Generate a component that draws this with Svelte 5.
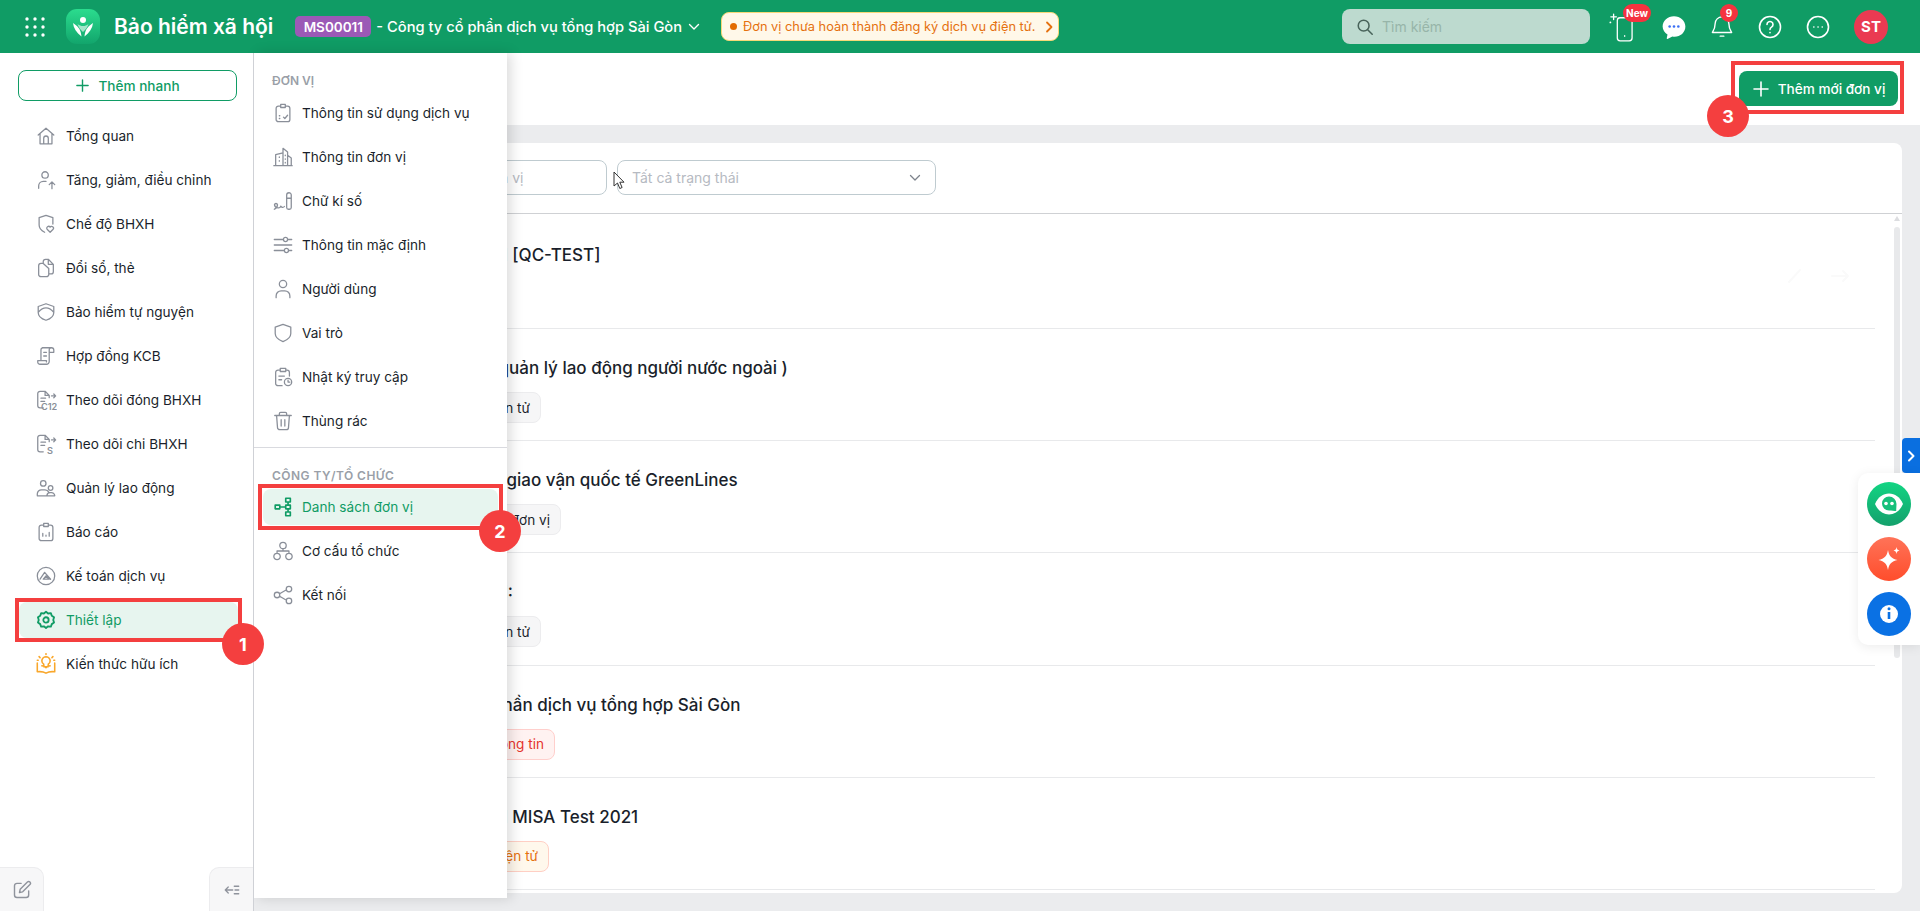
<script>
    const stroke = {
        home: "M3.5 11 12 3.5l8.5 7.5M5.5 9.5v11h13v-11M9.5 20.5v-6a2.5 2.5 0 0 1 5 0v6",
        userUp: "M11 3a3.5 3.5 0 1 0 0 7 3.5 3.5 0 0 0 0-7ZM4 21v-2.5a5 5 0 0 1 5-5h3M18.5 21.5v-7M15.5 17l3-3 3 3",
        shieldHeart: "M12 2.500 19.500 5v7M12 2.500 4.500 5v8c0 4 3 6.500 6 8M16.500 21l-3.300-3.300a2 2 0 0 1 3.300-2.300 2 2 0 0 1 3.300 2.300Z",
        copy: "M9 7V5a2.500 2.500 0 0 1 2.500-2.500h3L20 8v8a2.500 2.500 0 0 1-2.500 2.500H15M14.500 2.500V8H20M6.500 7H9l6 5.500V19a2.500 2.500 0 0 1-2.500 2.500h-6A2.500 2.500 0 0 1 4 19V9.500A2.500 2.500 0 0 1 6.500 7Z",
        shield: "M12 3l8.500 3v6.500c0 4-3.800 7-8.500 8.500-4.700-1.500-8.500-4.500-8.500-8.500V6ZM3.800 12c3-3.500 5-4.500 8.200-4.500s5.200 1 8.200 4.500",
        scroll: "M8 3h10.500M18 3a2.500 2.500 0 0 0-2.500 2.500V18a3 3 0 0 1-3 3H5.500a2.500 2.500 0 0 1-2.500-2.500V17h9.500v1.500M6.500 17V5.500A2.500 2.500 0 0 1 9 3M18 3a2.500 2.500 0 0 1 2.500 2.500V8h-5M9.500 8h3M9.500 12h3",
        users: "M9 4a3 3 0 1 0 0 6 3 3 0 0 0 0-6ZM2.500 20v-1.500A4.500 4.500 0 0 1 7 14h4a4.500 4.500 0 0 1 4 2.500M17 9.500a2.500 2.500 0 1 0 0 5 2.500 2.500 0 0 0 0-5ZM13 20.500v-.5a3.500 3.500 0 0 1 3.500-3h1A3.500 3.500 0 0 1 21.500 20v.5ZM2.500 20.500H13",
        report: "M9 4.500H7A2.500 2.500 0 0 0 4.500 7v12A2.500 2.500 0 0 0 7 21.500h10a2.500 2.500 0 0 0 2.500-2.500V7A2.500 2.500 0 0 0 17 4.500h-2M9.500 2.500h5v3.500h-5ZM8.500 16.500v-3M12 16.500v-1M15.500 16.500v-4",
        ledger: "M12 2.500a9.500 9.500 0 1 0 0 19 9.500 9.500 0 0 0 0-19ZM5.500 15.500l5-7.500 6.500 7.500M9 15.500l3-3.500 3.500 3.500Z",
        clipboardCheck: "M9 4.500H7A2.500 2.500 0 0 0 4.500 7v12A2.500 2.500 0 0 0 7 21.500h10a2.500 2.500 0 0 0 2.500-2.500V7A2.500 2.500 0 0 0 17 4.500h-2M9.500 2.500h5v3.500h-5ZM8 15h.5M8 18h.5M12.500 16.500l1.500 1.500 3-3.500",
        building: "M2 21.500h20M4 21.500V9.500l8-2M12 21.500V2.500l5 4v15M17 10l4 3v8.500M8 12v.5M8 16v.5M14.500 10v.5M14.500 14v.5M14.500 18v.5",
        sign: "M2.500 21c2-1 3.500-3 3.500-5a1.700 1.700 0 0 0-3.300 0c0 2 1.800 3 3.800 3.500 1.500.3 3-.5 3-2 .5 1.500 3 2 4 .5M16 5.500a2.500 2.500 0 0 1 5 0V19a2 2 0 0 1-2 2h-1a2 2 0 0 1-2-2ZM16 9h5",
        sliders: "M2.500 6h10M17 6h4.500M12.500 6a2.200 2.200 0 1 0 4.500 0 2.200 2.200 0 0 0-4.500 0M2.500 12h19M2.500 18h11M18 18h3.500M13.500 18a2.200 2.200 0 1 0 4.500 0 2.200 2.200 0 0 0-4.500 0",
        user: "M12 2.500a4 4 0 1 0 0 8 4 4 0 0 0 0-8ZM4.500 21.500v-2a5.500 5.500 0 0 1 5.500-5.500h4a5.500 5.500 0 0 1 5.500 5.500v2",
        shieldPlain: "M12 2.500 20.500 5.500v7c0 4-3.800 7-8.500 9-4.700-2-8.500-5-8.500-9v-7Z",
        log: "M9 4.500H6.500A2.500 2.500 0 0 0 4 7v12a2.500 2.500 0 0 0 2.500 2.500H11M15 4.500h1.500A2.500 2.500 0 0 1 19 7v4M9 2.500h6v3.500H9ZM7.500 11h6M7.500 15h3M17.500 13.500a4 4 0 1 0 0 8 4 4 0 0 0 0-8ZM17.500 15.500v2h2",
        trash: "M3 6h18M8 6V4a1.500 1.500 0 0 1 1.500-1.500h5A1.500 1.500 0 0 1 16 4v2M5 6l1 13a2.500 2.500 0 0 0 2.500 2.500h7A2.500 2.500 0 0 0 18 19l1-13M10 10.500v7M14 10.500v7",
        hierarchy: "M3.500 10h5v4h-5ZM15 2.500h5v4h-5ZM15 10h5v4h-5ZM15 17.500h5v4h-5ZM8.500 12H15M17.500 6.500V10M17.500 14v3.500",
        org: "M12 2.500a3.500 3.500 0 1 0 0 7 3.500 3.500 0 0 0 0-7ZM5.500 14.500a3.500 3.500 0 1 0 0 7 3.500 3.500 0 0 0 0-7ZM18.500 14.500a3.500 3.500 0 1 0 0 7 3.500 3.500 0 0 0 0-7ZM5.500 14.500V12h13v2.500M12 9.500V12",
        share: "M18.500 2.500a3 3 0 1 0 0 6 3 3 0 0 0 0-6ZM18.500 15.500a3 3 0 1 0 0 6 3 3 0 0 0 0-6ZM5.500 9a3 3 0 1 0 0 6 3 3 0 0 0 0-6ZM8.300 10.700l7.500-4.500M8.300 13.300l7.500 4.500",
        gear: "M12 3l2.300 1.900 3-.4 1 2.800 2.500 1.700-.9 2.900.9 2.900-2.500 1.700-1 2.800-3-.4L12 20.800l-2.300-1.900-3 .4-1-2.800-2.500-1.700.9-2.900-.9-2.900 2.500-1.700 1-2.800 3 .4ZM12 9a2.900 2.900 0 1 0 0 5.800A2.900 2.900 0 0 0 12 9Z",
        book: "M2.500 11v9.500c3.500-.5 7 0 9.500 1.500 2.500-1.500 6-2 9.500-1.500V11M7.500 14c1.800.3 3.500 1 4.500 2 1-1 2.700-1.700 4.500-2M12 4a4.500 4.500 0 0 0-2.500 8.200V15h5v-2.800A4.500 4.500 0 0 0 12 4ZM12 .8v.8M4.500 4l1 1M19.500 4l-1 1M2.500 8h1M20.500 8h1"
    };

    const nav = [
        { label: "Tổng quan", icon: "home" },
        { label: "Tăng, giảm, điều chỉnh", icon: "userUp" },
        { label: "Chế độ BHXH", icon: "shieldHeart" },
        { label: "Đổi sổ, thẻ", icon: "copy" },
        { label: "Bảo hiểm tự nguyện", icon: "shield" },
        { label: "Hợp đồng KCB", icon: "scroll" },
        { label: "Theo dõi đóng BHXH", tiny: "C12" },
        { label: "Theo dõi chi BHXH", tiny: "S" },
        { label: "Quản lý lao động", icon: "users" },
        { label: "Báo cáo", icon: "report" },
        { label: "Kế toán dịch vụ", icon: "ledger" },
        { label: "Thiết lập", icon: "gear", active: true },
        { label: "Kiến thức hữu ích", icon: "book", warm: true }
    ];

    const menuUnit = [
        { label: "Thông tin sử dụng dịch vụ", icon: "clipboardCheck" },
        { label: "Thông tin đơn vị", icon: "building" },
        { label: "Chữ kí số", icon: "sign" },
        { label: "Thông tin mặc định", icon: "sliders" },
        { label: "Người dùng", icon: "user" },
        { label: "Vai trò", icon: "shieldPlain" },
        { label: "Nhật ký truy cập", icon: "log" },
        { label: "Thùng rác", icon: "trash" }
    ];

    const menuOrg = [
        { label: "Danh sách đơn vị", icon: "hierarchy", active: true },
        { label: "Cơ cấu tổ chức", icon: "org" },
        { label: "Kết nối", icon: "share" }
    ];

    const rows = [
        { title: "Công ty ABCI [QC-TEST]" },
        { title: "Công ty TI ( quản lý lao động người nước ngoài )", tag: "Đăng ký điện tử", tone: "gray", width: 142 },
        { title: "Công ty CPT giao vận quốc tế GreenLines", tag: "Chưa có đơn vị", tone: "gray", width: 162 },
        { title: "Công ty ABCI:", tag: "Đăng ký điện tử", tone: "gray", width: 142 },
        { title: "Công ty cổ phần dịch vụ tổng hợp Sài Gòn", tag: "Thiếu thông tin", tone: "red", width: 156 },
        { title: "Công ty ABCI MISA Test 2021", tag: "Chưa có điện tử", tone: "orange", width: 150 }
    ];
</script>

{#snippet icon(name)}
    <svg class="ico" viewBox="0 0 24 24" fill="none" stroke="currentColor" stroke-width="1.4" stroke-linecap="round" stroke-linejoin="round">
        <path d={stroke[name]} />
    </svg>
{/snippet}

{#snippet fileIcon(code)}
    <svg class="ico" viewBox="0 0 24 24" fill="none" stroke="currentColor" stroke-width="1.4" stroke-linecap="round" stroke-linejoin="round">
        <path d="M9 20.500H5.500A2.500 2.500 0 0 1 3 18V5a2.500 2.500 0 0 1 2.500-2.500H11l4.500 4.500v2.500M11 2.500V7h4.500M6.500 10h5M6.500 13.500h4M18 7.500h4.500M20.500 5.500l2 2-2 2" />
        <text x={code === "S" ? 13 : 6.500} y="23" font-size="10" font-family="Inter, sans-serif" font-weight="600" fill="currentColor" stroke="none">{code}</text>
    </svg>
{/snippet}

<div class="shell">
    <header class="topbar">
        <svg class="apps" viewBox="0 0 20 20" fill="#fff">
            <circle cx="2" cy="2" r="1.700" /><circle cx="10" cy="2" r="1.700" /><circle cx="18" cy="2" r="1.700" />
            <circle cx="2" cy="10" r="1.700" /><circle cx="10" cy="10" r="1.700" /><circle cx="18" cy="10" r="1.700" />
            <circle cx="2" cy="18" r="1.700" /><circle cx="10" cy="18" r="1.700" /><circle cx="18" cy="18" r="1.700" />
        </svg>
        <svg class="logo" viewBox="0 0 34 35">
            <defs>
                <linearGradient id="logoFill" x1="0" y1="0" x2="0" y2="1">
                    <stop offset="0" stop-color="#2bdc8e" />
                    <stop offset="1" stop-color="#12a56c" />
                </linearGradient>
            </defs>
            <rect width="34" height="35" rx="11" fill="url(#logoFill)" />
            <circle cx="17" cy="11" r="3" fill="#fff" />
            <path d="M7 14c.5 5 3.500 9.500 8.500 13.500-.5-5-1.500-9-8.500-13.500ZM27 14c-.5 5-3.500 9.500-8.500 13.500.5-5 1.500-9 8.500-13.500Z" fill="#fff" />
            <path d="M11.500 15c2 1.500 3.500 2 5.500 2s3.500-.5 5.500-2c-1 3-3 6-5.500 8-2.500-2-4.500-5-5.500-8Z" fill="#fff" opacity=".6" />
        </svg>
        <span class="brand">Bảo hiểm xã hội</span>
        <span class="code">MS00011</span>
        <span class="company">- Công ty cổ phần dịch vụ tổng hợp Sài Gòn</span>
        <svg class="caret" viewBox="0 0 12 8" fill="none" stroke="#fff" stroke-width="1.400" stroke-linecap="round" stroke-linejoin="round"><path d="M1.500 1.500 6 6l4.500-4.500" /></svg>
        <div class="notice">
            <i></i>
            <span>Đơn vị chưa hoàn thành đăng ký dịch vụ điện tử.</span>
            <svg viewBox="0 0 8 12" fill="none" stroke="#e5710f" stroke-width="1.800" stroke-linecap="round" stroke-linejoin="round"><path d="M2 1.500 6.500 6 2 10.500" /></svg>
        </div>

        <div class="search">
            <svg viewBox="0 0 20 20" fill="none" stroke="#48635a" stroke-width="1.700" stroke-linecap="round"><circle cx="8.500" cy="8.500" r="6" /><path d="m13 13 5 5" /></svg>
            <span>Tìm kiếm</span>
        </div>

        <div class="slot">
            <svg class="phone" viewBox="0 0 26 32" fill="none" stroke="#fff" stroke-width="1.400" stroke-linecap="round">
                <rect x="9" y="6" width="16" height="25" rx="3" />
                <path d="M17 25.500v.5M5 2v6M2 5h6" />
                <circle cx="1.500" cy="11" r="1" fill="#fff" stroke="none" />
            </svg>
            <span class="badge new">New</span>
        </div>
        <div class="slot">
            <svg class="chat" viewBox="0 0 24 24">
                <path d="M12 2c5.800 0 10.500 4 10.500 9.500S17.800 21 12.500 21c-.8 0-1.200 0-2-.2L6 23c-.5.200-.8-.2-.7-.6l.7-3.400C3.300 17.200 1.500 14.500 1.500 11.500 1.500 6 6.200 2 12 2Z" fill="#fff" />
                <circle cx="8" cy="11.500" r="1.200" fill="#3b6ff5" /><circle cx="12" cy="11.500" r="1.200" fill="#3b6ff5" /><circle cx="16" cy="11.500" r="1.200" fill="#3b6ff5" />
            </svg>
        </div>
        <div class="slot">
            <svg class="bell" viewBox="0 0 24 26" fill="none" stroke="#fff" stroke-width="1.500" stroke-linecap="round" stroke-linejoin="round">
                <path d="M12 2.500a7.500 7.500 0 0 0-7.500 7.500c0 5-1.500 7-3 9.500h21c-1.500-2.500-3-4.500-3-9.500A7.500 7.500 0 0 0 12 2.500ZM10 23.500h4" />
            </svg>
            <span class="badge count">9</span>
        </div>
        <div class="slot">
            <svg class="round" viewBox="0 0 24 24" fill="none" stroke="#fff" stroke-width="1.600" stroke-linecap="round" stroke-linejoin="round">
                <circle cx="12" cy="12" r="10.500" /><path d="M9 9.500a3 3 0 1 1 4.500 2.600c-1 .6-1.500 1.200-1.500 2.400M12 17.500v.2" />
            </svg>
        </div>
        <div class="slot">
            <svg class="round" viewBox="0 0 24 24" fill="none" stroke="#fff" stroke-width="1.600" stroke-linecap="round">
                <circle cx="12" cy="12" r="10.500" /><path d="M7.800 12h.1M12 12h.1M16.200 12h.1" />
            </svg>
        </div>
        <div class="avatar">ST</div>
    </header>

    <div class="body">
        <aside class="sidebar">
            <button class="quick">
                <svg viewBox="0 0 16 16" fill="none" stroke="currentColor" stroke-width="1.500" stroke-linecap="round"><path d="M8 2v12M2 8h12" /></svg>
                Thêm nhanh
            </button>
            <nav class="nav">
                {#each nav as item}
                    <div class="nav-item" class:active={item.active} class:warm={item.warm}>
                        {#if item.tiny}
                            {@render fileIcon(item.tiny)}
                        {:else}
                            {@render icon(item.icon)}
                        {/if}
                        <span>{item.label}</span>
                        {#if item.active}<b class="step one">1</b>{/if}
                    </div>
                {/each}
            </nav>
            <div class="side-foot">
                <button class="foot-btn left" aria-label="Ghi chú">
                    <svg viewBox="0 0 24 24" fill="none" stroke="#8f939c" stroke-width="1.700" stroke-linecap="round" stroke-linejoin="round"><path d="M11 4H6a3 3 0 0 0-3 3v11a3 3 0 0 0 3 3h11a3 3 0 0 0 3-3v-5M9 15l.8-3.800L18.500 2.500a2 2 0 0 1 3 3l-8.700 8.700Z" /></svg>
                </button>
                <button class="foot-btn right" aria-label="Thu gọn">
                    <svg viewBox="0 0 24 24" fill="none" stroke="#8f939c" stroke-width="1.700" stroke-linecap="round" stroke-linejoin="round"><path d="M3 12h10M7 8l-4 4 4 4M15 7h6M16 12h5M15 17h6" /></svg>
                </button>
            </div>
        </aside>

        <div class="megamenu">
            <div class="menu-group first">
                <h4>ĐƠN VỊ</h4>
                {#each menuUnit as item}
                    <div class="menu-item">{@render icon(item.icon)}<span>{item.label}</span></div>
                {/each}
            </div>
            <div class="menu-group">
                <h4 class="wide">CÔNG TY/TỔ CHỨC</h4>
                {#each menuOrg as item}
                    <div class="menu-item" class:active={item.active}>
                        {@render icon(item.icon)}<span>{item.label}</span>
                        {#if item.active}<b class="step two">2</b>{/if}
                    </div>
                {/each}
            </div>
        </div>

        <main class="main">
            <div class="main-head">
                <div class="hl">
                    <button class="add">
                        <svg viewBox="0 0 18 18" fill="none" stroke="#fff" stroke-width="1.600" stroke-linecap="round"><path d="M9 2v14M2 9h14" /></svg>
                        Thêm mới đơn vị
                    </button>
                    <b class="step three">3</b>
                </div>
            </div>
            <div class="content">
                <section class="card">
                    <div class="filters">
                        <div class="field name"><span>Tìm kiếm đơn vị</span></div>
                        <div class="field status">
                            <span>Tất cả trạng thái</span>
                            <svg viewBox="0 0 12 8" fill="none" stroke="#7d838c" stroke-width="1.300" stroke-linecap="round" stroke-linejoin="round"><path d="M1.500 1.500 6 6l4.500-4.500" /></svg>
                        </div>
                        <svg class="pointer" viewBox="0 0 12 19"><path d="M1 1v14l3.500-3 2.300 5.500 2.300-1-2.300-5.300H11Z" fill="#fff" stroke="#333" stroke-width="1" stroke-linejoin="round" /></svg>
                    </div>
                    <div class="list">
                        {#each rows as row, i}
                            <div class="row">
                                <div class="title">{row.title}</div>
                                {#if row.tag}
                                    <span class="tag {row.tone}" style="width: {row.width}px">{row.tag}</span>
                                {/if}
                                {#if i === 0}
                                    <div class="row-actions">
                                        <svg viewBox="0 0 20 20" fill="none" stroke="#fafafa" stroke-width="2" stroke-linecap="round"><path d="M4 16 15 4" /></svg>
                                        <svg viewBox="0 0 20 20" fill="none" stroke="#fafafa" stroke-width="2" stroke-linecap="round" stroke-linejoin="round"><path d="M2 10h16M13 5l5 5-5 5" /></svg>
                                    </div>
                                {/if}
                            </div>
                        {/each}
                    </div>
                    <div class="thumb-track"></div>
                </section>
            </div>
        </main>

        <button class="tab" aria-label="Mở rộng">
            <svg viewBox="0 0 8 12" fill="none" stroke="#fff" stroke-width="2" stroke-linecap="round" stroke-linejoin="round"><path d="M2 1.500 6.500 6 2 10.500" /></svg>
        </button>
        <div class="float">
            <span class="fab green">
                <svg viewBox="0 0 44 44">
                    <path d="M8 22c3-7 8-10.500 14-10.500S33 15 36 22c-3 7-8 10.500-14 10.500S11 29 8 22Z" fill="#fff" />
                    <path d="M22 14.500a7.500 7.500 0 0 1 7.500 7.500c0 2-.3 4.500-.3 7-2 0-4.500-.5-7.200-.5a7 7 0 0 1 0-14Z" fill="#16c07b" />
                    <circle cx="19" cy="21.500" r="1.800" fill="#fff" /><circle cx="25" cy="21.500" r="1.800" fill="#fff" />
                </svg>
            </span>
            <span class="fab orange">
                <svg viewBox="0 0 44 44" fill="#fff">
                    <path d="M21 13c1 6 3.500 8.500 9.500 10-6 1.500-8.500 4-9.500 10-1-6-3.500-8.500-9.500-10 6-1.500 8.500-4 9.500-10Z" />
                    <path d="M29.500 10c.4 2.300 1 3 3 3.500-2 .5-2.600 1.200-3 3.500-.4-2.300-1-3-3-3.500 2-.5 2.600-1.200 3-3.500Z" />
                </svg>
            </span>
            <span class="fab blue">
                <svg viewBox="0 0 44 44">
                    <circle cx="22" cy="22" r="9" fill="#fff" />
                    <path d="M22 20v7" stroke="#0a71e4" stroke-width="2.600" />
                    <circle cx="22" cy="16.800" r="1.500" fill="#0a71e4" />
                </svg>
            </span>
        </div>
    </div>
</div>

<style>
    :global(body) {
        margin: 0;
        font-family: Inter, "Noto Sans", sans-serif;
        color: #1a1f2b;
    }

    button {
        font-family: inherit;
        padding: 0;
        cursor: pointer;
    }

    .shell {
        height: 911px;
        display: flex;
        flex-direction: column;
        overflow: hidden;
    }

    .topbar {
        height: 53px;
        flex: none;
        background: #109c65;
        display: flex;
        align-items: center;
        padding: 0 32px 0 25px;
        color: #fff;
    }

    .apps {
        width: 20px;
        height: 20px;
    }

    .logo {
        width: 34px;
        height: 35px;
        margin-left: 21px;
    }

    .brand {
        margin-left: 14px;
        font-size: 21px;
        font-weight: 600;
    }

    .code {
        margin-left: 22px;
        background: #9b59b6;
        border-radius: 5px;
        height: 21px;
        width: 76px;
        display: flex;
        align-items: center;
        justify-content: center;
        font-size: 13.5px;
        font-weight: 600;
    }

    .company {
        margin-left: 5px;
        font-size: 14.7px;
        font-weight: 500;
    }

    .caret {
        width: 12px;
        height: 8px;
        margin-left: 6px;
    }

    .notice {
        margin-left: 21px;
        height: 29px;
        width: 338px;
        box-sizing: border-box;
        background: #fff8e9;
        border: 1px solid #f6d877;
        border-radius: 8px;
        display: flex;
        align-items: center;
        padding-left: 8px;
        font-size: 12.8px;
        color: #e5710f;
    }

    .notice i {
        width: 7px;
        height: 7px;
        border-radius: 50%;
        background: #e36b00;
        margin-right: 6px;
    }

    .notice svg {
        width: 8px;
        height: 12px;
        margin-left: 10px;
    }

    .search {
        margin-left: auto;
        margin-right: 12px;
        width: 248px;
        height: 35px;
        background: #bddacf;
        border-radius: 8px;
        display: flex;
        align-items: center;
        padding-left: 14px;
        box-sizing: border-box;
        font-size: 14px;
        color: #97b5a9;
    }

    .search svg {
        width: 18px;
        height: 18px;
        margin-right: 8px;
    }

    .slot {
        width: 48px;
        height: 53px;
        position: relative;
        display: flex;
        align-items: center;
        justify-content: center;
    }

    .phone {
        width: 24px;
        height: 30px;
        margin-left: -10px;
    }

    .chat {
        width: 26px;
        height: 26px;
    }

    .bell {
        width: 22px;
        height: 25px;
    }

    .round {
        width: 24px;
        height: 24px;
    }

    .badge {
        position: absolute;
        background: #f5333f;
        color: #fff;
        font-weight: 700;
        display: flex;
        align-items: center;
        justify-content: center;
    }

    .badge.new {
        left: 21px;
        top: 4px;
        width: 28px;
        height: 18px;
        border-radius: 9px;
        font-size: 10px;
    }

    .badge.count {
        left: 22px;
        top: 4px;
        width: 18px;
        height: 18px;
        border-radius: 50%;
        font-size: 10px;
    }

    .avatar {
        margin-left: 12px;
        width: 34px;
        height: 34px;
        border-radius: 50%;
        background: #ea3a52;
        display: flex;
        align-items: center;
        justify-content: center;
        font-size: 15px;
        font-weight: 700;
    }

    .body {
        flex: 1;
        min-height: 0;
        display: flex;
        position: relative;
    }

    .sidebar {
        width: 254px;
        flex: none;
        box-sizing: border-box;
        border-right: 1px solid #cfd1d6;
        background: #fff;
        display: flex;
        flex-direction: column;
        padding-top: 17px;
        position: relative;
        z-index: 6;
    }

    .quick {
        margin-left: 18px;
        width: 219px;
        height: 31px;
        flex: none;
        border: 1px solid #109c65;
        border-radius: 8px;
        background: #fff;
        color: #109c65;
        font-size: 13.6px;
        font-weight: 500;
        display: flex;
        align-items: center;
        justify-content: center;
        gap: 8px;
    }

    .quick svg {
        width: 15px;
        height: 15px;
    }

    .nav {
        margin-top: 17px;
        display: flex;
        flex-direction: column;
        gap: 8px;
    }

    .nav-item {
        height: 36px;
        margin: 0 15px 0 19px;
        padding-left: 16px;
        display: flex;
        align-items: center;
        gap: 9px;
        font-size: 13.6px;
        border-radius: 8px;
        position: relative;
    }

    .ico {
        width: 22px;
        height: 22px;
        flex: none;
        color: #8a8f99;
    }

    .nav-item.active {
        background: #e7f5ef;
        color: #109c65;
    }

    .nav-item.active::before {
        content: "";
        position: absolute;
        inset: -4px;
        border: 4px solid #f43f3f;
    }

    .nav-item.active .ico {
        color: #109c65;
        stroke-width: 2;
    }

    .nav-item.warm .ico {
        color: #f9a72b;
        stroke-width: 1.7;
    }

    .step {
        position: absolute;
        width: 42px;
        height: 42px;
        border-radius: 50%;
        background: #f43f3f;
        color: #fff;
        font-size: 18px;
        font-weight: 700;
        display: flex;
        align-items: center;
        justify-content: center;
    }

    .step.one {
        right: -26px;
        bottom: -27px;
    }

    .step.two {
        right: -23px;
        bottom: -27px;
    }

    .step.three {
        left: -28px;
        bottom: -27px;
    }

    .side-foot {
        margin-top: auto;
        display: flex;
        justify-content: space-between;
    }

    .foot-btn {
        width: 44px;
        height: 44px;
        background: #f7f7f8;
        border: 1px solid #ececee;
        border-bottom: 0;
        display: flex;
        align-items: center;
        justify-content: center;
    }

    .foot-btn.left {
        border-left: 0;
        border-top-right-radius: 10px;
    }

    .foot-btn.right {
        border-right: 0;
        border-top-left-radius: 10px;
    }

    .foot-btn svg {
        width: 18px;
        height: 18px;
    }

    .foot-btn.left svg {
        width: 20px;
        height: 20px;
    }

    .megamenu {
        position: absolute;
        left: 254px;
        top: 0;
        width: 253px;
        height: 845px;
        background: #fff;
        box-shadow: 4px 0 12px rgba(0, 0, 0, 0.14);
        z-index: 5;
    }

    .menu-group {
        padding: 20px 9px 0;
    }

    .menu-group.first {
        padding-top: 20px;
        padding-bottom: 0;
        border-bottom: 1px solid #d9dadf;
    }

    h4 {
        margin: 0 0 6px;
        padding-left: 9px;
        font-size: 12px;
        line-height: 16px;
        font-weight: 600;
        color: #9a9fa8;
    }

    h4.wide {
        margin-bottom: 5px;
        letter-spacing: 0.45px;
    }

    .menu-item {
        height: 36px;
        margin-bottom: 8px;
        padding-left: 9px;
        display: flex;
        align-items: center;
        gap: 8px;
        font-size: 13.6px;
        border-radius: 8px;
        position: relative;
    }

    .menu-item.active {
        background: #e7f5ef;
        color: #109c65;
    }

    .menu-item.active::before {
        content: "";
        position: absolute;
        inset: -5px;
        border: 4px solid #f43f3f;
    }

    .menu-item.active .ico {
        color: #109c65;
        stroke-width: 1.8;
    }

    .main {
        flex: 1;
        min-width: 0;
        display: flex;
        flex-direction: column;
        background: #ebecee;
    }

    .main-head {
        height: 72px;
        flex: none;
        box-sizing: border-box;
        background: #fff;
        display: flex;
        justify-content: flex-end;
        align-items: flex-start;
        padding: 8px 16px 0 0;
    }

    .hl {
        position: relative;
        border: 4px solid #f43f3f;
        padding: 6px 2px 4px 4px;
        display: flex;
    }

    .add {
        width: 159px;
        height: 35px;
        border: 0;
        border-radius: 8px;
        background: #109c65;
        color: #fff;
        font-size: 13.6px;
        font-weight: 500;
        display: flex;
        align-items: center;
        justify-content: center;
        gap: 8px;
    }

    .add svg {
        width: 18px;
        height: 18px;
    }

    .content {
        flex: 1;
        min-height: 0;
        padding: 18px 18px 18px 16px;
        box-sizing: border-box;
    }

    .card {
        height: 750px;
        background: #fff;
        border-radius: 8px;
        position: relative;
        overflow: hidden;
    }

    .filters {
        height: 71px;
        box-sizing: border-box;
        border-bottom: 1px solid #cfd1d4;
        display: flex;
        align-items: flex-start;
        gap: 10px;
        padding: 17px 0 0 136px;
        position: relative;
    }

    .field {
        height: 35px;
        box-sizing: border-box;
        border: 1px solid #bfcbd0;
        border-radius: 8px;
        display: flex;
        align-items: center;
        font-size: 14px;
        color: #b6bac2;
        padding: 0 14px;
    }

    .field.name {
        width: 201px;
        padding: 0 12px;
    }

    .field.status {
        width: 319px;
        justify-content: space-between;
    }

    .field.status svg {
        width: 12px;
        height: 8px;
    }

    .pointer {
        position: absolute;
        left: 343px;
        top: 28px;
        width: 12px;
        height: 19px;
    }

    .list {
        margin-right: 27px;
        padding-left: 129px;
    }

    .row {
        height: 112.2px;
        box-sizing: border-box;
        border-bottom: 1px solid #e8e9eb;
        padding-top: 27px;
        position: relative;
    }

    .row:first-child {
        height: 115px;
        padding-top: 29px;
    }

    .row-actions {
        position: absolute;
        right: 25px;
        top: 52px;
        display: flex;
        gap: 25px;
    }

    .row-actions svg {
        width: 20px;
        height: 20px;
    }

    .title {
        font-size: 17px;
        line-height: 24px;
        font-weight: 550;
    }

    .tag {
        display: flex;
        align-items: center;
        justify-content: flex-end;
        margin-top: 12px;
        height: 31px;
        box-sizing: border-box;
        padding: 0 10px;
        border-radius: 8px;
        font-size: 13.6px;
        border: 1px solid #ececee;
        background: #f6f6f7;
    }

    .tag.red {
        background: #fff2f1;
        border-color: #ffcfcc;
        color: #e5322d;
    }

    .tag.orange {
        background: #fff8ec;
        border-color: #ffcfc4;
        color: #e5710f;
    }

    .thumb-track {
        position: absolute;
        right: 2px;
        top: 84px;
        width: 6px;
        height: 431px;
        border-radius: 3px;
        background: #e8e9eb;
    }

    .thumb-track::before {
        content: "";
        position: absolute;
        left: 0;
        top: -11px;
        border-left: 3px solid transparent;
        border-right: 3px solid transparent;
        border-bottom: 5px solid #dcdde0;
    }

    .tab {
        position: absolute;
        right: 0;
        top: 385px;
        width: 18px;
        height: 35px;
        border: 0;
        border-radius: 4px 0 0 4px;
        background: #0a6fe0;
        display: flex;
        align-items: center;
        justify-content: center;
    }

    .tab svg {
        width: 8px;
        height: 12px;
    }

    .float {
        position: absolute;
        right: 0;
        top: 420px;
        width: 62px;
        height: 172px;
        box-sizing: border-box;
        background: #fff;
        border-radius: 10px 0 0 10px;
        box-shadow: 0 2px 12px rgba(0, 0, 0, 0.08);
        display: flex;
        flex-direction: column;
        align-items: center;
        gap: 11px;
        padding: 9px 0 0 0;
    }

    .fab {
        width: 44px;
        height: 44px;
        border-radius: 50%;
        display: block;
    }

    .fab svg {
        width: 44px;
        height: 44px;
        display: block;
    }

    .fab.green {
        background: linear-gradient(#12d583, #14a06c);
    }

    .fab.orange {
        background: linear-gradient(#ff7358, #ff4d2c);
    }

    .fab.blue {
        background: #0a71e4;
    }
</style>
